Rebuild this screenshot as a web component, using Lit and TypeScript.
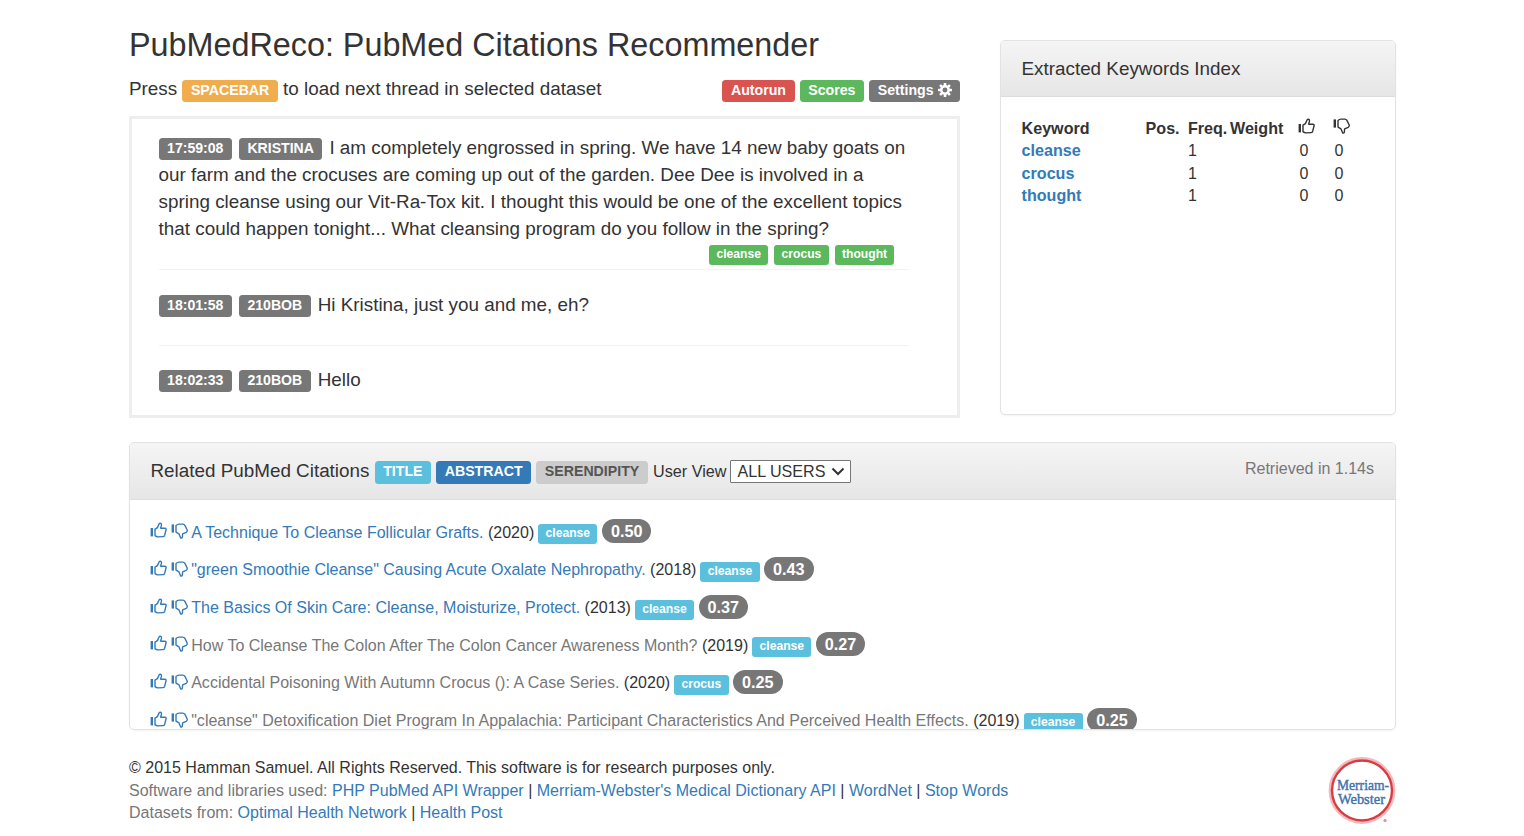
import { LitElement, html, css, svg, nothing } from "lit";
import { customElement, property } from "lit/decorators.js";

const up = svg`<rect x="0.6" y="6" width="2.4" height="8.4" fill="currentColor"/>
  <path d="M5 7.2 L7.4 5.6 L9.2 1.7 Q9.8 .9 10.8 1.4 Q11.7 2 11.4 3.4 L10.6 6.2 L15.1 6.2 Q16.5 6.6 16 8 L14.7 13.2 Q14.2 14.6 13 14.6 L8 14.9 Q6.4 14.7 5 13.6 Z" fill="none" stroke="currentColor" stroke-width="1.4" stroke-linejoin="round"/>`;
const down = svg`<rect x="0.6" y="1.4" width="2.4" height="8.2" fill="currentColor"/>
  <path d="M5 2.5 Q6.5 1.1 8 1.1 L11.8 1.1 Q13.2 1.1 13.9 2.4 L16.2 7 Q16.5 8.6 15.2 9.3 L11.6 10.8 L11.4 14 Q11 15.4 9.7 15.1 L8 10.9 L5 9.1 Z" fill="none" stroke="currentColor" stroke-width="1.4" stroke-linejoin="round"/>`;

@customElement("thumb-icon")
class ThumbIcon extends LitElement {
  @property() dir = "up";
  static styles = css`
    :host { display: inline-block; width: 17px; height: 16px; }
    svg { display: block; }
  `;
  render() {
    return html`<svg width="17" height="16" viewBox="0 0 17 16">${this.dir === "up" ? up : down}</svg>`;
  }
}

type Citation = { title: string; year: number; tag: string; score: string; muted?: boolean };

const citations: Citation[] = [
  { title: "A Technique To Cleanse Follicular Grafts.", year: 2020, tag: "cleanse", score: "0.50" },
  { title: '"green Smoothie Cleanse" Causing Acute Oxalate Nephropathy.', year: 2018, tag: "cleanse", score: "0.43" },
  { title: "The Basics Of Skin Care: Cleanse, Moisturize, Protect.", year: 2013, tag: "cleanse", score: "0.37" },
  { title: "How To Cleanse The Colon After The Colon Cancer Awareness Month?", year: 2019, tag: "cleanse", score: "0.27", muted: true },
  { title: "Accidental Poisoning With Autumn Crocus (): A Case Series.", year: 2020, tag: "crocus", score: "0.25", muted: true },
  { title: '"cleanse" Detoxification Diet Program In Appalachia: Participant Characteristics And Perceived Health Effects.', year: 2019, tag: "cleanse", score: "0.25", muted: true },
];

const messages = [
  {
    time: "17:59:08",
    user: "KRISTINA",
    text: "I am completely engrossed in spring. We have 14 new baby goats on our farm and the crocuses are coming up out of the garden. Dee Dee is involved in a spring cleanse using our Vit-Ra-Tox kit. I thought this would be one of the excellent topics that could happen tonight... What cleansing program do you follow in the spring?",
    tags: ["cleanse", "crocus", "thought"],
  },
  { time: "18:01:58", user: "210BOB", text: "Hi Kristina, just you and me, eh?", tags: [] },
  { time: "18:02:33", user: "210BOB", text: "Hello", tags: [] },
];

@customElement("app-root")
class AppRoot extends LitElement {
  static styles = css`
    :host {
      display: block; box-sizing: border-box; height: 836px; overflow: hidden;
      padding: 25px 128px 0 129px; background: #fff; color: #333;
      font: 16.03px/22.5px "Liberation Sans", Arial, sans-serif;
    }
    * { box-sizing: border-box; }
    a { color: #337ab7; text-decoration: none; }
    .top { display: flex; justify-content: space-between; height: 417px; }
    .left { width: 831px; }
    h1 { margin: 0; font-weight: 400; font-size: 32.35px; line-height: 40px; }
    .bar { display: flex; justify-content: space-between; font-size: 18.85px; line-height: 27px; margin-top: 10px; height: 41px; }
    .label {
      display: inline; padding: .14em .6em .3em; border-radius: .25em; color: #fff;
      font-size: 14.1px; font-weight: 700; line-height: 1; background: #777; white-space: nowrap;
    }
    .bar .label { font-size: 14.175px; }
    .small { font-size: 12.15px; padding-top: .2em; }
    .orange { background: #f0ad4e; }
    .red { background: #d9534f; }
    .green { background: #5cb85c; }
    .cyan { background: #5bc0de; }
    .blue { background: #337ab7; }
    .silver { background: #ccc; color: #555; }
    .gear { width: 14px; height: 14px; vertical-align: -2px; }
    .chat { border: 3px solid #eee; height: 302px; padding: 15px 48px 0 26.6px; overflow: hidden; }
    .chat .label, .head .label { vertical-align: 1px; }
    .msg { border-bottom: 1px solid #f2f2f2; font-size: 18.85px; line-height: 27px; height: 75.5px; padding-top: 20.5px; }
    .msg.first { height: 136px; padding-top: 0; }
    .msg:last-child { border-bottom: 0; }
    .name { margin: 0 7px; }
    .tags { display: flex; justify-content: flex-end; gap: 6px; padding-right: 14.6px; line-height: 20px; font-size: 16.2px; }
    .tags .label { vertical-align: 0; }
    .panel { border: 1px solid #e2e2e2; border-radius: 5px; box-shadow: 0 1px 2px rgba(0,0,0,.05); overflow: hidden; }
    .head {
      height: 56px; padding: 1px 21px 0 20.5px; display: flex; align-items: center; border-bottom: 1px solid #ddd;
      background: linear-gradient(#f5f5f5, #e6e6e6); font-size: 18.85px; white-space: pre;
    }
    .keywords { width: 396px; height: 375px; margin-top: 15px; }
    .grid {
      display: grid; grid-template-columns: 124px 42.4px 42px 69.4px 35px 40px; grid-auto-rows: 22.5px;
      padding: 19.8px 0 0 20.6px;
    }
    .grid .icon { margin: 1.7px 0 0 -1px; }
    b { font-weight: 700; font-size: 16.1px; }
    .citations { height: 288px; }
    .related { height: 57px; }
    .related .label { font-size: 14.175px; }
    .view { font-size: 16.2px; }
    .select {
      display: inline-flex; align-items: center; justify-content: space-between; width: 121px; height: 23px;
      margin-left: 4px; padding: 0 5px 0 6px; background: #fff; border: 1px solid #767676; border-radius: 1px; font-size: 16.1px;
    }
    .time { margin-left: auto; color: #777; font-size: 16.03px; padding-bottom: 7px; }
    .list { padding: 13px 20px 0; }
    .row { display: flex; align-items: center; height: 37.7px; white-space: pre; }
    .votes { display: flex; gap: 4px; width: 41.2px; padding-bottom: 2px; color: #337ab7; }
    .votes thumb-icon + thumb-icon { margin-top: 1px; }
    .muted { color: #777; }
    .badge { background: #777; color: #fff; font-size: 16.2px; font-weight: 700; line-height: 24px; padding: 0 9px; border-radius: 12px; margin: 0 0 1px 4.5px; }
    .tagbox { margin-left: 4px; }
    footer { display: flex; justify-content: space-between; padding-top: 26px; }
    .logo { display: block; }
  `;

  render() {
    return html`
      <div class="top">
        <div class="left">
          <h1>PubMedReco: PubMed Citations Recommender</h1>
          <div class="bar">
            <div>Press <span class="label orange">SPACEBAR</span> to load next thread in selected dataset</div>
            <div>
              <span class="label red">Autorun</span>
              <span class="label green">Scores</span>
              <span class="label">Settings <svg class="gear" viewBox="0 0 16 16"><g fill="#fff">${[0, 45, 90, 135].map((a) => svg`<rect x="6.5" y="0" width="3" height="16" rx=".6" transform="rotate(${a} 8 8)"/>`)}<circle cx="8" cy="8" r="5.6"/></g><circle cx="8" cy="8" r="2.8" fill="#777"/></svg></span>
            </div>
          </div>
          <div class="chat">
            ${messages.map((m, i) => html`<div class="msg ${i === 0 ? "first" : ""}"><span class="label">${m.time}</span><span class="label name">${m.user}</span>${m.text}${m.tags.length ? html`<div class="tags">${m.tags.map((t) => html`<div><span class="label small green">${t}</span></div>`)}</div>` : nothing}</div>`)}
          </div>
        </div>
        <div class="panel keywords">
          <div class="head">Extracted Keywords Index</div>
          <div class="grid">
            <b>Keyword</b><b>Pos.</b><b>Freq.</b><b>Weight</b>
            <thumb-icon class="icon"></thumb-icon><thumb-icon class="icon" dir="down"></thumb-icon>
            ${["cleanse", "crocus", "thought"].map((k) => html`<a><b>${k}</b></a><span></span><span>1</span><span></span><span>0</span><span>0</span>`)}
          </div>
        </div>
      </div>
      <div class="panel citations">
        <div class="head related"><span>Related PubMed Citations <span class="label cyan">TITLE</span> <span class="label blue">ABSTRACT</span> <span class="label silver">SERENDIPITY</span> <span class="view">User View</span></span><span class="select">ALL USERS<svg width="14" height="9" viewBox="0 0 14 9"><path d="M1.5 1.5 L7 7 L12.5 1.5" fill="none" stroke="#333" stroke-width="2"/></svg></span><span class="time">Retrieved in 1.14s</span></div>
        <div class="list">
          ${citations.map((c) => html`<div class="row"><span class="votes"><thumb-icon></thumb-icon><thumb-icon dir="down"></thumb-icon></span><a class="${c.muted ? "muted" : ""}">${c.title}</a> (${c.year})<span class="tagbox"><span class="label small cyan">${c.tag}</span></span><span class="badge">${c.score}</span></div>`)}
        </div>
      </div>
      <footer>
        <div>
          <div>© 2015 Hamman Samuel. All Rights Reserved. This software is for research purposes only.</div>
          <div><span class="muted">Software and libraries used:</span> <a>PHP PubMed API Wrapper</a> | <a>Merriam-Webster's Medical Dictionary API</a> | <a>WordNet</a> | <a>Stop Words</a></div>
          <div><span class="muted">Datasets from:</span> <a>Optimal Health Network</a> | <a>Health Post</a></div>
        </div>
        <svg class="logo" width="68" height="69" viewBox="0 0 68 69">
          <circle cx="34" cy="34.5" r="32.2" fill="#fff" stroke="#f3b9bb" stroke-width="2.4"/>
          <circle cx="34" cy="34.5" r="30" fill="#fff" stroke="#d63c42" stroke-width="2.4"/>
          <g fill="#3f73ae" stroke="#3f73ae" stroke-width=".45" font-family="Liberation Serif, serif" font-size="15.5">
            <text x="9" y="34" textLength="52" lengthAdjust="spacingAndGlyphs">Merriam-</text>
            <text x="10" y="48" textLength="47" lengthAdjust="spacingAndGlyphs">Webster</text>
          </g>
          <circle cx="57" cy="64.5" r="1.6" fill="#e8898c"/>
        </svg>
      </footer>
    `;
  }
}
